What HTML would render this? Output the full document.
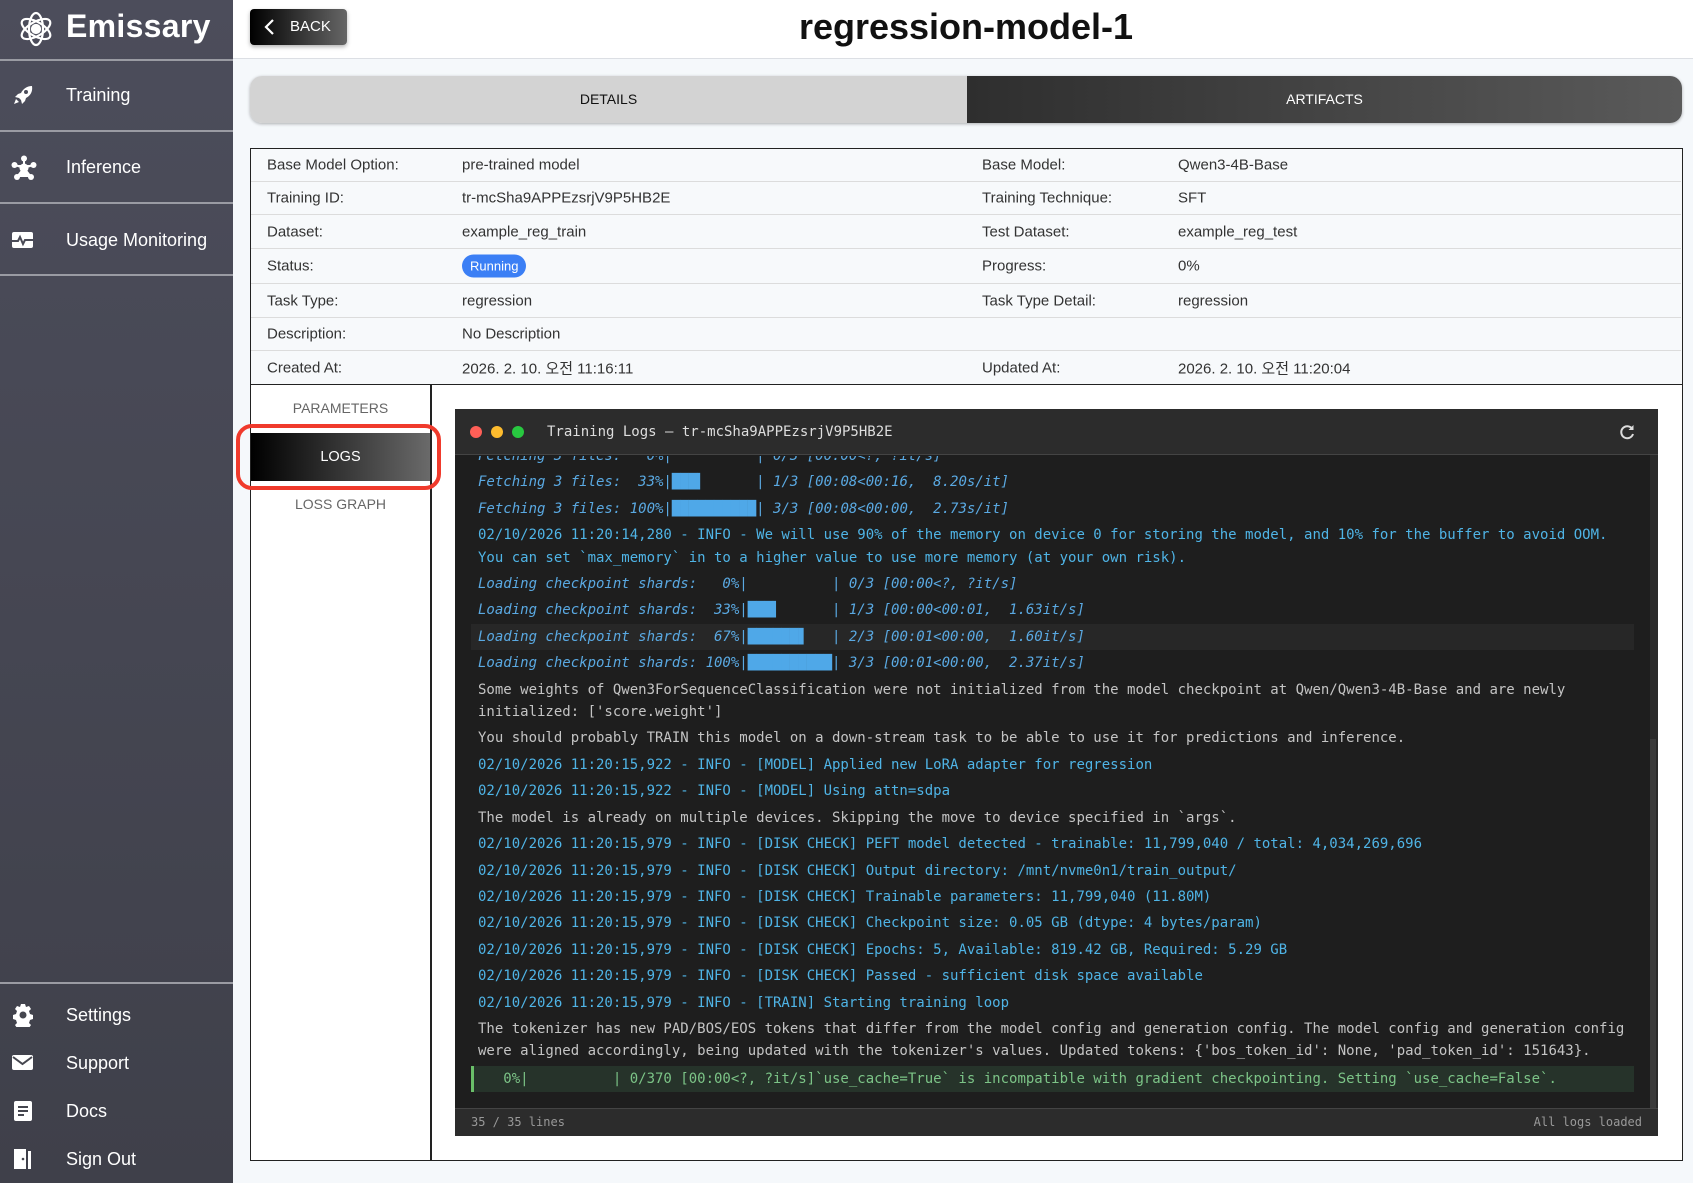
<!DOCTYPE html>
<html><head><meta charset="utf-8"><style>
*{box-sizing:border-box;margin:0;padding:0}
body{width:1693px;height:1183px;overflow:hidden;background:#f5f8fb;font-family:"Liberation Sans","Noto Sans CJK KR",sans-serif;position:relative;color:#333}
.abs{position:absolute}
#side{left:0;top:0;width:233px;height:1183px;background:linear-gradient(#4c4d5b,#3f404a)}
.nav{position:absolute;left:0;width:233px;color:#fff;font-size:18px}
.nav span{position:absolute;left:66px;top:-10px;line-height:20px;white-space:nowrap}
.nav svg{position:absolute;left:11px;top:-12px}
.hr{position:absolute;left:0;width:233px;height:2px;background:#9a9ba3}
#hdr{left:233px;top:0;width:1460px;height:59px;background:#fff;border-bottom:1px solid #dcdfe4}
.row{position:absolute;left:0;width:1430px;border-top:1px solid #dcdcdc;font-size:15px}
.row span{position:absolute;top:50%;transform:translateY(-50%);white-space:nowrap}
.log{font-family:"DejaVu Sans Mono","Liberation Mono",monospace;font-size:14px;line-height:22.4px;white-space:pre;padding:2px 0 2px 7px}
.b{color:#4fb4e6}.i{font-style:italic;color:#5aa9e2}.g{color:#c4c4c4}
.bar{color:#4fa8e8;font-style:normal}
</style></head><body>
<div id="side" class="abs">
  <svg class="abs" style="left:17px;top:11px" width="38" height="36" viewBox="0 0 38 36" fill="none" stroke="#fff" stroke-width="2.2"><ellipse cx="19" cy="18" rx="16" ry="7" transform="rotate(30 19 18)"/><ellipse cx="19" cy="18" rx="16" ry="7" transform="rotate(-30 19 18)"/><ellipse cx="19" cy="18" rx="16" ry="7" transform="rotate(90 19 18)"/><circle cx="19" cy="18" r="4" fill="#fff"/></svg>
  <div class="abs" style="left:66px;top:8px;color:#fff;font-weight:bold;font-size:32px;letter-spacing:0.3px">Emissary</div>
  <div class="hr" style="top:59px"></div>
  <div class="nav" style="top:95px"><svg width="24" height="24" viewBox="0 0 24 24" fill="#fff"><path d="M21 3c-5 0-9 3-11 7l-3 1-3 3 4 1 2 2 1 4 3-3 1-3c4-2 7-6 6-12zM15 7a2 2 0 1 1 0 4 2 2 0 0 1 0-4zM5 16l-2 5 5-2z"/></svg><span>Training</span></div>
  <div class="hr" style="top:130px"></div>
  <div class="nav" style="top:167px"><svg width="26" height="26" viewBox="0 0 26 26" fill="#fff"><circle cx="13" cy="13" r="4.5"/><circle cx="13" cy="3.5" r="3"/><circle cx="3.5" cy="10" r="3"/><circle cx="22.5" cy="10" r="3"/><circle cx="6" cy="22" r="3"/><circle cx="20" cy="22" r="3"/><path d="M13 4v9M4 10l9 3 9-3M6 22l7-9 7 9" stroke="#fff" stroke-width="2"/></svg><span>Inference</span></div>
  <div class="hr" style="top:202px"></div>
  <div class="nav" style="top:240px"><svg width="24" height="24" viewBox="0 0 24 24"><rect x="1" y="4" width="21" height="16" rx="2" fill="#fff"/><path d="M1 13h6l2-4 3 7 2-4h8" stroke="#4a4b57" stroke-width="2" fill="none"/></svg><span>Usage Monitoring</span></div>
  <div class="hr" style="top:274px"></div>
  <div class="hr" style="top:982px"></div>
  <div class="nav" style="top:1015px"><svg width="24" height="24" viewBox="0 0 24 24" fill="#fff"><path d="M10 1h4l1 3 3-1 2 3-2 2 1 3 3 1v4l-3 1-1 3 2 2-2 3-3-1-1 3h-4l-1-3-3 1-2-3 2-2-1-3-3-1v-4l3-1 1-3-2-2 2-3 3 1z"/><circle cx="12" cy="12" r="3.5" fill="#45464f"/></svg><span>Settings</span></div>
  <div class="nav" style="top:1063px"><svg width="24" height="24" viewBox="0 0 24 24"><rect x="1" y="4" width="21" height="15" rx="2" fill="#fff"/><path d="M2 6l9.5 7L21 6" stroke="#45464f" stroke-width="2" fill="none"/></svg><span>Support</span></div>
  <div class="nav" style="top:1111px"><svg width="24" height="24" viewBox="0 0 24 24"><rect x="3" y="2" width="18" height="20" rx="2" fill="#fff"/><path d="M7 8h10M7 12h10M7 16h6" stroke="#45464f" stroke-width="2"/></svg><span>Docs</span></div>
  <div class="nav" style="top:1159px"><svg width="24" height="24" viewBox="0 0 24 24" fill="#fff"><path d="M3 2h12v20H3zM17 4h3v18h-3z"/><circle cx="12" cy="12" r="1.3" fill="#45464f"/></svg><span>Sign Out</span></div>
</div>
<div id="hdr" class="abs"></div>
<div class="abs" style="left:250px;top:9px;width:97px;height:36px;border-radius:4px;background:linear-gradient(90deg,#000,#666);box-shadow:0 2px 4px rgba(0,0,0,.3);color:#fff;font-size:15px;line-height:36px;padding-left:40px">BACK<svg class="abs" style="left:14px;top:10px" width="12" height="16" viewBox="0 0 12 16"><path d="M9 1L2 8l7 7" stroke="#fff" stroke-width="2.2" fill="none"/></svg></div>
<div class="abs" style="left:700px;top:6px;width:532px;text-align:center;font-weight:bold;font-size:36px;color:#111">regression-model-1</div>
<div class="abs" style="left:250px;top:76px;width:1432px;height:47px;border-radius:12px;overflow:hidden;box-shadow:0 1px 3px rgba(0,0,0,.3)">
  <div class="abs" style="left:0;top:0;width:717px;height:47px;background:#d3d3d3;text-align:center;line-height:47px;font-size:14px;color:#111">DETAILS</div>
  <div class="abs" style="left:717px;top:0;width:715px;height:47px;background:linear-gradient(90deg,#2e2e2e,#5a5a5a);text-align:center;line-height:47px;font-size:14px;color:#fff">ARTIFACTS</div>
</div>
<div class="abs" style="left:250px;top:148px;width:1433px;height:1013px;border:1.5px solid #222;background:#f7f9fb"></div>
<div class="abs" style="left:251px;top:148px;width:1431px;height:236px">
  <div class="row" style="top:0;height:33px;border-top:none"><span style="left:16px">Base Model Option:</span><span style="left:211px">pre-trained model</span><span style="left:731px">Base Model:</span><span style="left:927px">Qwen3-4B-Base</span></div>
  <div class="row" style="top:33px;height:33px"><span style="left:16px">Training ID:</span><span style="left:211px">tr-mcSha9APPEzsrjV9P5HB2E</span><span style="left:731px">Training Technique:</span><span style="left:927px">SFT</span></div>
  <div class="row" style="top:66px;height:34px"><span style="left:16px">Dataset:</span><span style="left:211px">example_reg_train</span><span style="left:731px">Test Dataset:</span><span style="left:927px">example_reg_test</span></div>
  <div class="row" style="top:100px;height:35px"><span style="left:16px">Status:</span><span style="left:211px;background:#3b7ff5;color:#fff;font-size:13px;padding:4px 8px;border-radius:12px">Running</span><span style="left:731px">Progress:</span><span style="left:927px">0%</span></div>
  <div class="row" style="top:135px;height:34px"><span style="left:16px">Task Type:</span><span style="left:211px">regression</span><span style="left:731px">Task Type Detail:</span><span style="left:927px">regression</span></div>
  <div class="row" style="top:169px;height:33px"><span style="left:16px">Description:</span><span style="left:211px">No Description</span></div>
  <div class="row" style="top:202px;height:34px"><span style="left:16px">Created At:</span><span style="left:211px">2026. 2. 10. 오전 11:16:11</span><span style="left:731px">Updated At:</span><span style="left:927px">2026. 2. 10. 오전 11:20:04</span></div>
</div>
<div class="abs" style="left:251px;top:384px;width:1431px;height:776px;background:#fff;border-top:1.5px solid #222"></div>
<div class="abs" style="left:430px;top:384px;width:1.5px;height:777px;background:#222"></div>
<div class="abs" style="left:251px;top:398px;width:179px;text-align:center;font-size:14px;color:#666;line-height:20px">PARAMETERS</div>
<div class="abs" style="left:251px;top:433px;width:179px;height:48px;background:linear-gradient(90deg,#000,#6a6a6a);color:#fff;text-align:center;line-height:48px;font-size:14.5px">LOGS</div>
<div class="abs" style="left:236px;top:424px;width:205px;height:66px;border:4px solid #f03a2c;border-radius:16px"></div>
<div class="abs" style="left:251px;top:494px;width:179px;text-align:center;font-size:14px;color:#666;line-height:20px">LOSS GRAPH</div>
<div class="abs" style="left:455px;top:409px;width:1203px;height:727px;background:#1e1e1e;overflow:hidden">
  <div class="abs" style="left:0;top:0;width:1203px;height:46px;background:#2c2c2c;border-bottom:1px solid #444"></div>
  <div class="abs" style="left:15px;top:17px;width:12px;height:12px;border-radius:6px;background:#ff5f57"></div>
  <div class="abs" style="left:36px;top:17px;width:12px;height:12px;border-radius:6px;background:#febc2e"></div>
  <div class="abs" style="left:57px;top:17px;width:12px;height:12px;border-radius:6px;background:#28c840"></div>
  <div class="abs" style="left:92px;top:15px;font-family:'DejaVu Sans Mono',monospace;font-size:14px;color:#ddd;white-space:pre">Training Logs – tr-mcSha9APPEzsrjV9P5HB2E</div>
  <svg class="abs" style="left:1163px;top:14px" width="18" height="18" viewBox="0 0 18 18"><path d="M14 5.5A6 6 0 1 0 15 11" stroke="#ddd" stroke-width="2" fill="none"/><path d="M15.5 2v5h-5z" fill="#ddd"/></svg>
  <div class="abs" style="left:1195px;top:46px;width:8px;height:654px;background:#2a2a2a"></div>
  <div class="abs" style="left:1195px;top:330px;width:6px;height:370px;background:#3a3a3a"></div>
  <div class="abs" style="left:16px;top:47px;width:1163px;height:652px;overflow:hidden">
   <div class="abs" style="left:0;top:-13px;width:1163px">
<div class="log i">Fetching 3 files:   0%|          | 0/3 [00:00&lt;?, ?it/s]</div>
<div class="log i">Fetching 3 files:  33%|<span class="bar">███▍</span>      | 1/3 [00:08&lt;00:16,  8.20s/it]</div>
<div class="log i">Fetching 3 files: 100%|<span class="bar">██████████</span>| 3/3 [00:08&lt;00:00,  2.73s/it]</div>
<div class="log b">02/10/2026 11:20:14,280 - INFO - We will use 90% of the memory on device 0 for storing the model, and 10% for the buffer to avoid OOM.
You can set `max_memory` in to a higher value to use more memory (at your own risk).</div>
<div class="log i">Loading checkpoint shards:   0%|          | 0/3 [00:00&lt;?, ?it/s]</div>
<div class="log i">Loading checkpoint shards:  33%|<span class="bar">███▍</span>      | 1/3 [00:00&lt;00:01,  1.63it/s]</div>
<div class="log i" style="background:#272727">Loading checkpoint shards:  67%|<span class="bar">██████▋</span>   | 2/3 [00:01&lt;00:00,  1.60it/s]</div>
<div class="log i">Loading checkpoint shards: 100%|<span class="bar">██████████</span>| 3/3 [00:01&lt;00:00,  2.37it/s]</div>
<div class="log g">Some weights of Qwen3ForSequenceClassification were not initialized from the model checkpoint at Qwen/Qwen3-4B-Base and are newly
initialized: ['score.weight']</div>
<div class="log g">You should probably TRAIN this model on a down-stream task to be able to use it for predictions and inference.</div>
<div class="log b">02/10/2026 11:20:15,922 - INFO - [MODEL] Applied new LoRA adapter for regression</div>
<div class="log b">02/10/2026 11:20:15,922 - INFO - [MODEL] Using attn=sdpa</div>
<div class="log g">The model is already on multiple devices. Skipping the move to device specified in `args`.</div>
<div class="log b">02/10/2026 11:20:15,979 - INFO - [DISK CHECK] PEFT model detected - trainable: 11,799,040 / total: 4,034,269,696</div>
<div class="log b">02/10/2026 11:20:15,979 - INFO - [DISK CHECK] Output directory: /mnt/nvme0n1/train_output/</div>
<div class="log b">02/10/2026 11:20:15,979 - INFO - [DISK CHECK] Trainable parameters: 11,799,040 (11.80M)</div>
<div class="log b">02/10/2026 11:20:15,979 - INFO - [DISK CHECK] Checkpoint size: 0.05 GB (dtype: 4 bytes/param)</div>
<div class="log b">02/10/2026 11:20:15,979 - INFO - [DISK CHECK] Epochs: 5, Available: 819.42 GB, Required: 5.29 GB</div>
<div class="log b">02/10/2026 11:20:15,979 - INFO - [DISK CHECK] Passed - sufficient disk space available</div>
<div class="log b">02/10/2026 11:20:15,979 - INFO - [TRAIN] Starting training loop</div>
<div class="log g">The tokenizer has new PAD/BOS/EOS tokens that differ from the model config and generation config. The model config and generation config
were aligned accordingly, being updated with the tokenizer's values. Updated tokens: {'bos_token_id': None, 'pad_token_id': 151643}.</div>
<div class="log" style="color:#7cc487;background:#26332a;border-left:3px solid #6abf69;padding-left:4px;margin-top:1px">   0%|          | 0/370 [00:00&lt;?, ?it/s]`use_cache=True` is incompatible with gradient checkpointing. Setting `use_cache=False`.</div>
   </div>
  </div>
  <div class="abs" style="left:0;top:699px;width:1203px;height:28px;background:#2c2c2c;border-top:1px solid #444;font-family:'DejaVu Sans Mono',monospace;font-size:12px;color:#999;line-height:26px">
    <span class="abs" style="left:16px">35 / 35 lines</span><span class="abs" style="right:16px">All logs loaded</span>
  </div>
</div>
</body></html>
